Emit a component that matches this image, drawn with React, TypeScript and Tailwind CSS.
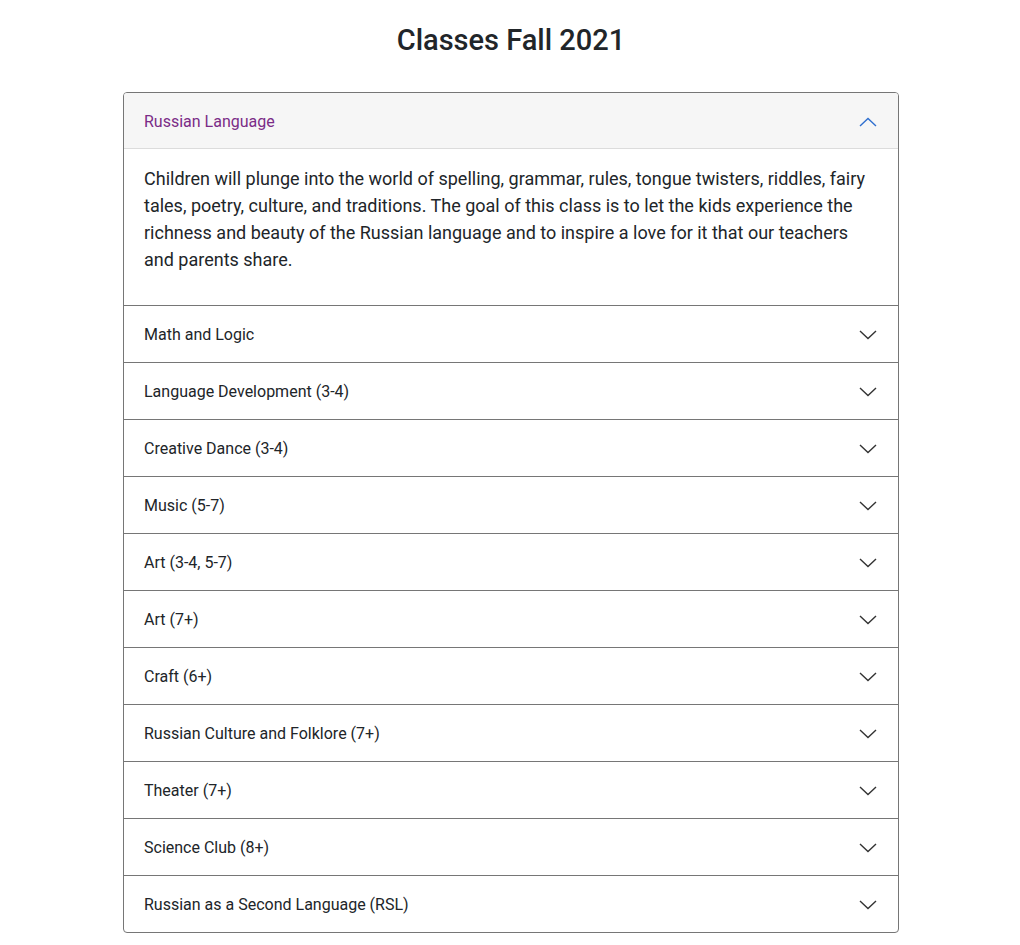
import { useState } from "react";

const classes = [
  {
    title: "Russian Language",
    text: "Children will plunge into the world of spelling, grammar, rules, tongue twisters, riddles, fairy tales, poetry, culture, and traditions. The goal of this class is to let the kids experience the richness and beauty of the Russian language and to inspire a love for it that our teachers and parents share.",
  },
  { title: "Math and Logic", text: "" },
  { title: "Language Development (3-4)", text: "" },
  { title: "Creative Dance (3-4)", text: "" },
  { title: "Music (5-7)", text: "" },
  { title: "Art (3-4, 5-7)", text: "" },
  { title: "Art (7+)", text: "" },
  { title: "Craft (6+)", text: "" },
  { title: "Russian Culture and Folklore (7+)", text: "" },
  { title: "Theater (7+)", text: "" },
  { title: "Science Club (8+)", text: "" },
  { title: "Russian as a Second Language (RSL)", text: "" },
];

function Chevron({ open }: { open: boolean }) {
  return (
    <svg width="18" height="10" viewBox="0 0 18 10" fill="none">
      {open ? (
        <path d="M1 9L9 1.5L17 9" stroke="#2f6fcf" strokeWidth="1.4" />
      ) : (
        <path d="M1 1L9 8.5L17 1" stroke="#333333" strokeWidth="1.4" />
      )}
    </svg>
  );
}

export default function App() {
  const [open, setOpen] = useState(0);

  return (
    <div className="min-h-screen bg-white font-['Roboto',sans-serif] text-[#212529]">
      <h1 className="pt-[22px] pl-[2px] text-center text-[29px] leading-[36px] font-medium">
        Classes Fall 2021
      </h1>
      <div className="mt-[34px] flex justify-center pl-[2px]">
        <div className="w-[776px] rounded-[4px] border border-[#767676]">
          {classes.map((c, i) => {
            const isOpen = open === i;
            return (
              <div key={c.title} className={i > 0 ? "border-t border-[#767676]" : ""}>
                <button
                  onClick={() => setOpen(isOpen ? -1 : i)}
                  className={
                    isOpen
                      ? "flex h-[56px] w-full items-center justify-between rounded-t-[3px] border-b border-[#dcdcdc] bg-[#f6f6f6] pt-[2px] pl-5 pr-[21px] text-left text-[16px] text-[#7b2c87]"
                      : "flex h-[56px] w-full items-center justify-between pt-[2px] pl-5 pr-[21px] text-left text-[16px]"
                  }
                >
                  <span>{c.title}</span>
                  <Chevron open={isOpen} />
                </button>
                {isOpen && c.text && (
                  <div className="px-5 pt-4 pb-8">
                    <p className="text-[18px] leading-[27px]">{c.text}</p>
                  </div>
                )}
              </div>
            );
          })}
        </div>
      </div>
      <div className="h-3" />
    </div>
  );
}
